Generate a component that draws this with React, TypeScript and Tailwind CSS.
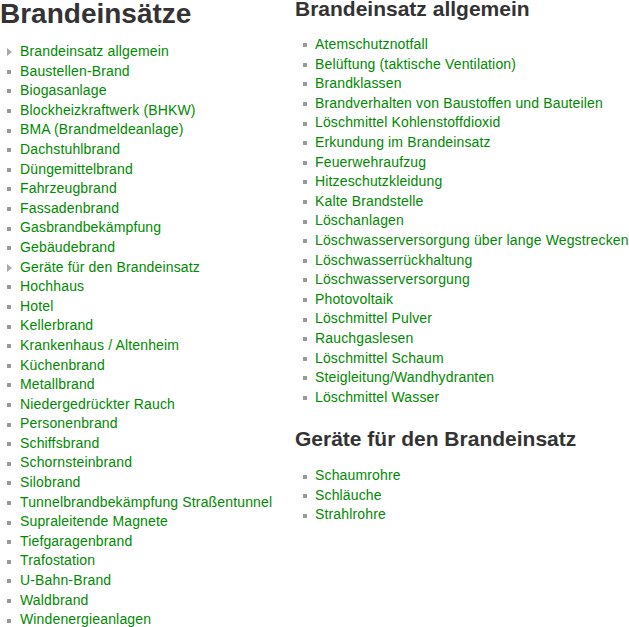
const left = [
  { label: "Brandeinsatz allgemein", sub: true },
  { label: "Baustellen-Brand" },
  { label: "Biogasanlage" },
  { label: "Blockheizkraftwerk (BHKW)" },
  { label: "BMA (Brandmeldeanlage)" },
  { label: "Dachstuhlbrand" },
  { label: "Düngemittelbrand" },
  { label: "Fahrzeugbrand" },
  { label: "Fassadenbrand" },
  { label: "Gasbrandbekämpfung" },
  { label: "Gebäudebrand" },
  { label: "Geräte für den Brandeinsatz", sub: true },
  { label: "Hochhaus" },
  { label: "Hotel" },
  { label: "Kellerbrand" },
  { label: "Krankenhaus / Altenheim" },
  { label: "Küchenbrand" },
  { label: "Metallbrand" },
  { label: "Niedergedrückter Rauch" },
  { label: "Personenbrand" },
  { label: "Schiffsbrand" },
  { label: "Schornsteinbrand" },
  { label: "Silobrand" },
  { label: "Tunnelbrandbekämpfung Straßentunnel" },
  { label: "Supraleitende Magnete" },
  { label: "Tiefgaragenbrand" },
  { label: "Trafostation" },
  { label: "U-Bahn-Brand" },
  { label: "Waldbrand" },
  { label: "Windenergieanlagen" },
];

const allgemein = [
  "Atemschutznotfall",
  "Belüftung (taktische Ventilation)",
  "Brandklassen",
  "Brandverhalten von Baustoffen und Bauteilen",
  "Löschmittel Kohlenstoffdioxid",
  "Erkundung im Brandeinsatz",
  "Feuerwehraufzug",
  "Hitzeschutzkleidung",
  "Kalte Brandstelle",
  "Löschanlagen",
  "Löschwasserversorgung über lange Wegstrecken",
  "Löschwasserrückhaltung",
  "Löschwasserversorgung",
  "Photovoltaik",
  "Löschmittel Pulver",
  "Rauchgaslesen",
  "Löschmittel Schaum",
  "Steigleitung/Wandhydranten",
  "Löschmittel Wasser",
];

const geraete = ["Schaumrohre", "Schläuche", "Strahlrohre"];

const Bullet = ({ sub }: { sub?: boolean }) =>
  sub ? (
    <svg width="5" height="8" viewBox="0 0 5 8" className="shrink-0 mt-[1px]">
      <path d="M0 0 L5 4 L0 8 Z" fill="#a8a8a8" />
    </svg>
  ) : (
    <span className="w-[4px] h-[4px] bg-[#999] shrink-0 mt-[1px]" />
  );

const Item = ({ label, sub, right }: { label: string; sub?: boolean; right?: boolean }) => (
  <li className="flex items-center h-[19.6px] leading-[19.6px] whitespace-nowrap">
    <span className={right ? "flex w-[20px] pl-[8px] items-center" : "flex w-[20px] pl-[7px] items-center"}>
      <Bullet sub={sub} />
    </span>
    <a href="#" className="text-[#008a00] no-underline tracking-[0.15px]">
      {label}
    </a>
  </li>
);

const App = () => {
  return (
    <div className="flex w-[629px] h-[627px] overflow-hidden bg-white font-['Liberation_Sans',Arial,sans-serif] text-[14px]">
      <div className="w-[295px] shrink-0">
        <h1 className="text-[28px] leading-[28px] font-bold text-[#333] m-0">Brandeinsätze</h1>
        <ul className="mt-[14px]">
          {left.map((item, index) => (
            <Item key={index} label={item.label} sub={item.sub} />
          ))}
        </ul>
      </div>

      <div className="flex-1">
        <h2 className="text-[21px] leading-[18px] font-bold text-[#333]">Brandeinsatz allgemein</h2>
        <ul className="mt-[17px]">
          {allgemein.map((label, index) => (
            <Item key={index} label={label} right />
          ))}
        </ul>

        <h2 className="mt-[23px] text-[21px] leading-[18px] font-bold text-[#333]">
          Geräte für den Brandeinsatz
        </h2>
        <ul className="mt-[18px]">
          {geraete.map((label, index) => (
            <Item key={index} label={label} right />
          ))}
        </ul>
      </div>
    </div>
  );
};

export default App;
